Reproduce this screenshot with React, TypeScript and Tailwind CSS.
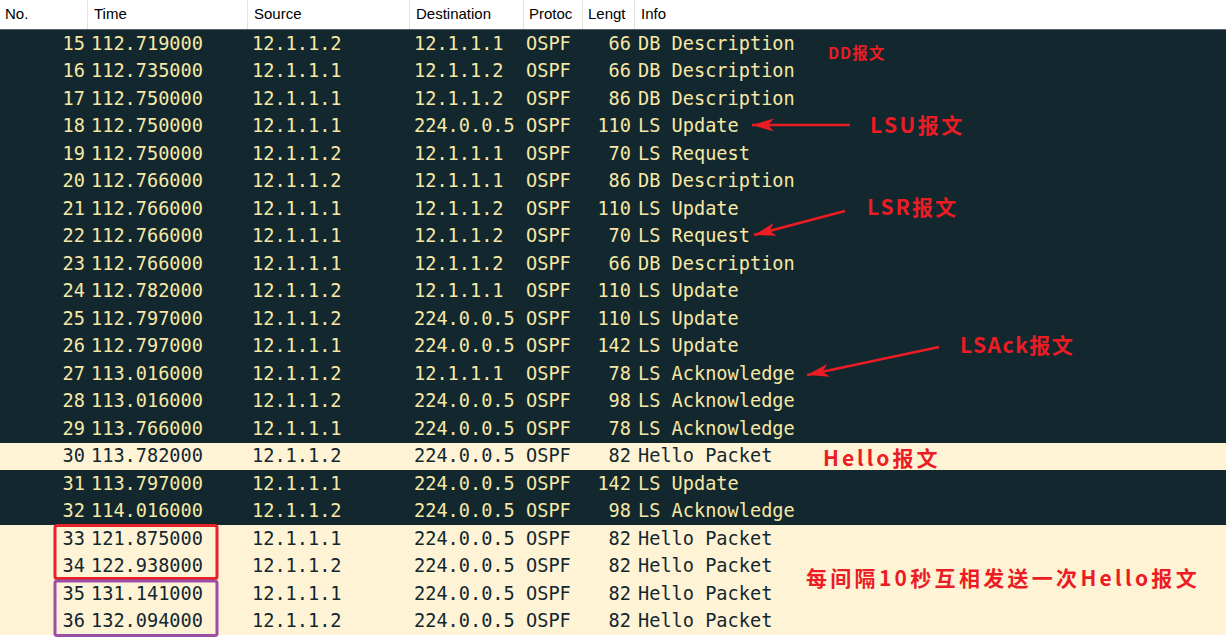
const rows: [number, string, string, string, string, number, string][] = [
  [15, "112.719000", "12.1.1.2", "12.1.1.1", "OSPF", 66, "DB Description"],
  [16, "112.735000", "12.1.1.1", "12.1.1.2", "OSPF", 66, "DB Description"],
  [17, "112.750000", "12.1.1.1", "12.1.1.2", "OSPF", 86, "DB Description"],
  [18, "112.750000", "12.1.1.1", "224.0.0.5", "OSPF", 110, "LS Update"],
  [19, "112.750000", "12.1.1.2", "12.1.1.1", "OSPF", 70, "LS Request"],
  [20, "112.766000", "12.1.1.2", "12.1.1.1", "OSPF", 86, "DB Description"],
  [21, "112.766000", "12.1.1.1", "12.1.1.2", "OSPF", 110, "LS Update"],
  [22, "112.766000", "12.1.1.1", "12.1.1.2", "OSPF", 70, "LS Request"],
  [23, "112.766000", "12.1.1.1", "12.1.1.2", "OSPF", 66, "DB Description"],
  [24, "112.782000", "12.1.1.2", "12.1.1.1", "OSPF", 110, "LS Update"],
  [25, "112.797000", "12.1.1.2", "224.0.0.5", "OSPF", 110, "LS Update"],
  [26, "112.797000", "12.1.1.1", "224.0.0.5", "OSPF", 142, "LS Update"],
  [27, "113.016000", "12.1.1.2", "12.1.1.1", "OSPF", 78, "LS Acknowledge"],
  [28, "113.016000", "12.1.1.2", "224.0.0.5", "OSPF", 98, "LS Acknowledge"],
  [29, "113.766000", "12.1.1.1", "224.0.0.5", "OSPF", 78, "LS Acknowledge"],
  [30, "113.782000", "12.1.1.2", "224.0.0.5", "OSPF", 82, "Hello Packet"],
  [31, "113.797000", "12.1.1.1", "224.0.0.5", "OSPF", 142, "LS Update"],
  [32, "114.016000", "12.1.1.2", "224.0.0.5", "OSPF", 98, "LS Acknowledge"],
  [33, "121.875000", "12.1.1.1", "224.0.0.5", "OSPF", 82, "Hello Packet"],
  [34, "122.938000", "12.1.1.2", "224.0.0.5", "OSPF", 82, "Hello Packet"],
  [35, "131.141000", "12.1.1.1", "224.0.0.5", "OSPF", 82, "Hello Packet"],
  [36, "132.094000", "12.1.1.2", "224.0.0.5", "OSPF", 82, "Hello Packet"],
];

const RED = "#ec1c24";

// flecha: linha + ponta em "dardo" apontando para (x2,y2)
function Arrow({ x1, y1, x2, y2 }: { x1: number; y1: number; x2: number; y2: number }) {
  const a = (Math.atan2(y2 - y1, x2 - x1) * 180) / Math.PI;
  return (
    <g>
      <line x1={x1} y1={y1} x2={x2} y2={y2} stroke={RED} strokeWidth={2.5} />
      <polygon
        points="0,0 -22,-6.5 -16,0 -22,6.5"
        fill={RED}
        transform={`translate(${x2} ${y2}) rotate(${a})`}
      />
    </g>
  );
}

function Note({ x, y, className, children }: { x: number; y: number; className: string; children: string }) {
  return (
    <div
      className={`absolute flex h-[30px] items-center font-bold leading-none text-[#ec1c24] ${className}`}
      style={{ left: x, top: y - 15, fontFamily: '"Noto Sans CJK SC", "Noto Sans", sans-serif' }}
    >
      {children}
    </div>
  );
}

export default function App() {
  return (
    <div className="relative h-[641px] w-[1226px] overflow-hidden bg-white">
      <div className="flex h-[30px] border-b border-[#56656b] text-[15px] text-black" style={{ fontFamily: '"Liberation Sans", Arial, sans-serif' }}>
        <div className="flex w-[87px] items-center pl-[5px]">No.</div>
        <div className="flex w-[160px] items-center border-l border-[#e2e2e2] pl-[6px]">Time</div>
        <div className="flex w-[162px] items-center border-l border-[#e2e2e2] pl-[6px]">Source</div>
        <div className="flex w-[114px] items-center border-l border-[#e2e2e2] pl-[6px]">Destination</div>
        <div className="flex w-[59px] items-center border-l border-[#e2e2e2] pl-[5px]">Protoc</div>
        <div className="flex w-[52px] items-center border-l border-[#e2e2e2] pl-[5px]">Lengt</div>
        <div className="flex flex-1 items-center border-l border-[#e2e2e2] pl-[6px]">Info</div>
      </div>
      <div className="text-[18.6px] whitespace-pre" style={{ fontFamily: '"DejaVu Sans Mono", "Liberation Mono", monospace' }}>
        {rows.map(([no, time, src, dst, proto, len, info]) => {
          const hello = info === "Hello Packet";
          return (
            <div
              key={no}
              className={`flex h-[27.5px] items-center ${hello ? "bg-[#fff3d6] text-[#12272e]" : "bg-[#12272e] text-[#f7e8a6]"}`}
            >
              <div className="w-[87px] pr-[2px] text-right">{no}</div>
              <div className="w-[160px] pl-[4px]">{time}</div>
              <div className="w-[162px] pl-[5px]">{src}</div>
              <div className="w-[114px] pl-[5px]">{dst}</div>
              <div className="w-[59px] pl-[3px]">{proto}</div>
              <div className="w-[52px] pr-[3px] text-right">{len}</div>
              <div className="flex-1 pl-[4px]">{info}</div>
            </div>
          );
        })}
      </div>

      <svg className="pointer-events-none absolute left-0 top-0" width={1226} height={641}>
        <Arrow x1={850} y1={125} x2={752} y2={125} />
        <Arrow x1={845} y1={211} x2={754} y2={235} />
        <Arrow x1={939} y1={347} x2={807} y2={375} />
        <rect x={55} y={525.5} width={162} height={53} rx={2} fill="none" stroke="#e8202a" strokeWidth={3} />
        <rect x={55} y={581} width={162} height={54.5} rx={2} fill="none" stroke="#9d4ea6" strokeWidth={3} />
      </svg>

      <Note x={828} y={53} className="text-[15.5px] tracking-[1px]">DD报文</Note>
      <Note x={870} y={124} className="text-[21px] tracking-[2.5px]">LSU报文</Note>
      <Note x={867} y={206} className="text-[21px] tracking-[2px]">LSR报文</Note>
      <Note x={960} y={344} className="text-[21px] tracking-[1.5px]">LSAck报文</Note>
      <Note x={823} y={457} className="text-[21px] tracking-[3px]">Hello报文</Note>
      <Note x={806} y={577} className="text-[21px] tracking-[3.3px]">每间隔10秒互相发送一次Hello报文</Note>
    </div>
  );
}
